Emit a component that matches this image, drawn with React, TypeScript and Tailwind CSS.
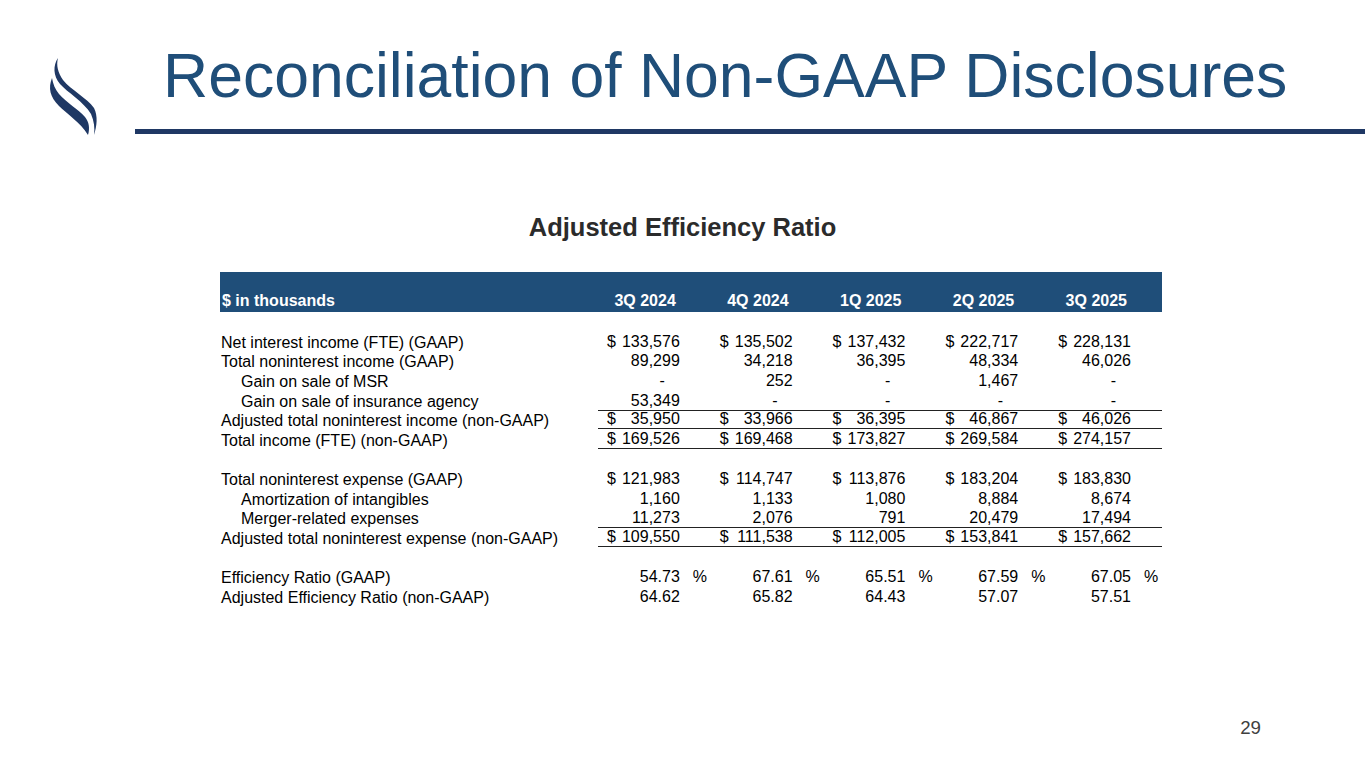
import React from "react";

type Row = {
  label: string;
  indent?: boolean;
  values: string[];
  dollar?: boolean;
  pct?: boolean;
  top?: boolean;
  bottom?: boolean;
};

const quarters = ["3Q 2024", "4Q 2024", "1Q 2025", "2Q 2025", "3Q 2025"];

const incomeRows: Row[] = [
  {
    label: "Net interest income (FTE) (GAAP)",
    values: ["133,576", "135,502", "137,432", "222,717", "228,131"],
    dollar: true,
  },
  {
    label: "Total noninterest income (GAAP)",
    values: ["89,299", "34,218", "36,395", "48,334", "46,026"],
  },
  { label: "Gain on sale of MSR", indent: true, values: ["-", "252", "-", "1,467", "-"] },
  { label: "Gain on sale of insurance agency", indent: true, values: ["53,349", "-", "-", "-", "-"] },
  {
    label: "Adjusted total noninterest income (non-GAAP)",
    values: ["35,950", "33,966", "36,395", "46,867", "46,026"],
    dollar: true,
    top: true,
    bottom: true,
  },
  {
    label: "Total income (FTE) (non-GAAP)",
    values: ["169,526", "169,468", "173,827", "269,584", "274,157"],
    dollar: true,
    bottom: true,
  },
];

const expenseRows: Row[] = [
  {
    label: "Total noninterest expense (GAAP)",
    values: ["121,983", "114,747", "113,876", "183,204", "183,830"],
    dollar: true,
  },
  { label: "Amortization of intangibles", indent: true, values: ["1,160", "1,133", "1,080", "8,884", "8,674"] },
  { label: "Merger-related expenses", indent: true, values: ["11,273", "2,076", "791", "20,479", "17,494"] },
  {
    label: "Adjusted total noninterest expense (non-GAAP)",
    values: ["109,550", "111,538", "112,005", "153,841", "157,662"],
    dollar: true,
    top: true,
    bottom: true,
  },
];

const ratioRows: Row[] = [
  { label: "Efficiency Ratio (GAAP)", values: ["54.73", "67.61", "65.51", "67.59", "67.05"], pct: true },
  { label: "Adjusted Efficiency Ratio (non-GAAP)", values: ["64.62", "65.82", "64.43", "57.07", "57.51"] },
];

// two flame-like swooshes
const Logo = () => (
  <svg width="70" height="85" viewBox="0 0 70 85" className="overflow-visible">
    <path
      d="M18 8 C13 15, 13 26, 20 34 C27 42, 44 52, 51 64 C54 71, 55 78, 54 85 C57 76, 58 66, 54 58 C47 48, 31 40, 23 30 C18 23, 16 15, 18 8 Z"
      fill="#1f3864"
    />
    <path
      d="M12 28 C8 38, 10 47, 19 56 C27 64, 40 72, 48 85 C50 78, 49 72, 45 67 C39 60, 26 52, 19 44 C15 39, 13 34, 12 28 Z"
      fill="#1f3864"
    />
  </svg>
);

const TableRow = ({ row }: { row: Row }) => (
  <div className="grid h-[19.65px] grid-cols-[378px_repeat(5,112.8px)]">
    <div className={`flex items-end leading-4 ${row.indent ? "pl-[21px]" : "pl-[1px]"}`}>
      {row.label}
    </div>
    {row.values.map((v, i) => (
      <div
        key={i}
        className={`flex items-end leading-4 pb-[1px] ${row.top ? "border-t border-[#222]" : ""} ${
          row.bottom ? "border-b border-[#222]" : ""
        }`}
      >
        <span className="w-[9px]" />
        <span className="w-[12px]">{row.dollar ? "$" : ""}</span>
        <span className={`flex-1 text-right ${v === "-" ? "pr-[15px]" : ""}`}>{v}</span>
        <span className="w-[31px] pl-[13px]">{row.pct ? "%" : ""}</span>
      </div>
    ))}
  </div>
);

export default function App() {
  return (
    <div
      className="flex h-[768px] w-[1365px] flex-col overflow-hidden bg-white text-black"
      style={{ fontFamily: '"Liberation Sans", Arial, sans-serif' }}
    >
      {/* title band */}
      <div className="flex h-[135px]">
        <div className="w-[135px] shrink-0 pl-[40px] pt-[50px]">
          <Logo />
        </div>
        <div className="flex flex-1 flex-col pt-[44px]">
          <h1 className="pl-[28px] text-[62.5px] leading-[62.5px] text-[#1f4e79]">
            Reconciliation of Non-GAAP Disclosures
          </h1>
          <div className="mt-[22.5px] h-[5px] bg-[#1f3864]" />
        </div>
      </div>

      <div className="pt-[80px] text-center text-[25.5px] font-bold leading-[25.5px] text-[#2b2b2b]">
        Adjusted Efficiency Ratio
      </div>

      <div className="ml-[220px] mt-[31px] w-[942px] text-[16px]">
        <div className="grid h-[40px] grid-cols-[378px_repeat(5,112.8px)] bg-[#1f4e79] pb-[3px] font-bold text-white">
          <div className="flex items-end pl-[2px] leading-4">$ in thousands</div>
          {quarters.map((q) => (
            <div key={q} className="flex items-end justify-end pr-[35px] leading-4">
              {q}
            </div>
          ))}
        </div>
        <div className="h-[19.5px]" />
        {incomeRows.map((r) => (
          <TableRow key={r.label} row={r} />
        ))}
        <div className="h-[19.65px]" />
        {expenseRows.map((r) => (
          <TableRow key={r.label} row={r} />
        ))}
        <div className="h-[19.65px]" />
        {ratioRows.map((r) => (
          <TableRow key={r.label} row={r} />
        ))}
      </div>

      <div className="mt-auto flex justify-end pb-[30px] pr-[104px] text-[18.7px] leading-[18.7px] text-[#404040]">
        29
      </div>
    </div>
  );
}
